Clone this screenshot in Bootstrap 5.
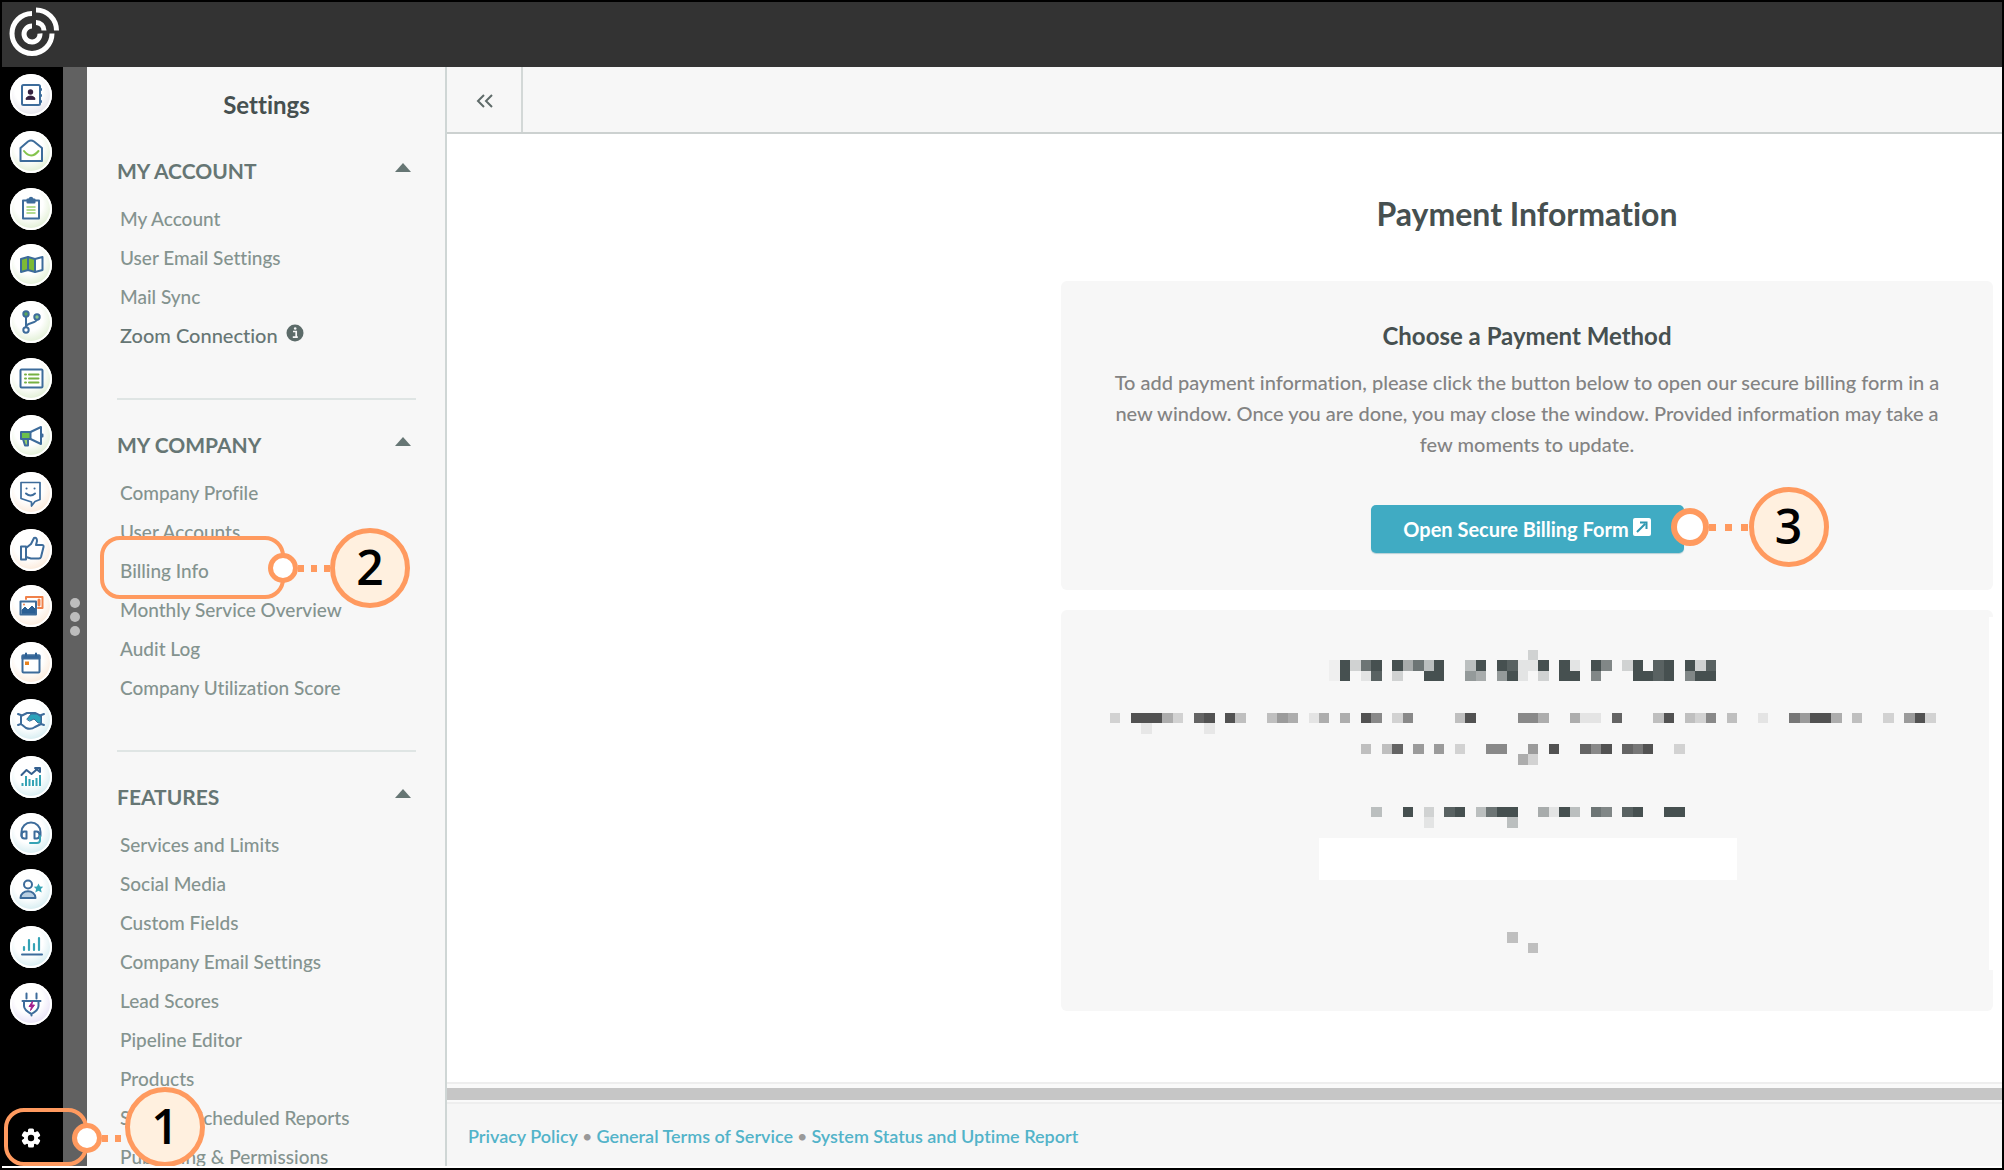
<!DOCTYPE html>
<html lang="en">
<head>
<meta charset="utf-8">
<meta name="viewport" content="width=device-width, initial-scale=1">
<title>Settings - Payment Information</title>
<link href="https://cdn.jsdelivr.net/npm/bootstrap@5.3.0/dist/css/bootstrap.min.css" rel="stylesheet">
<style>
  :root { --ink: #465050; --muted: #667674; --item: #84938f; --panel: #f7f7f7; --accent: #40abc3; --mark-line: #ff9a5f; --mark-fill: #fff0df; }
  body { font-family: Lato, "Open Sans", sans-serif; font-variant-ligatures: none; background: #fff; color: var(--ink); }
  a { text-decoration: none; }
  .app-shell { border: 2px solid #000; padding-bottom: 2px; }
  .top-bar { height: 65px; background: #333; padding: 3px 4px; }
  .rail { width: 61px; background: #000; z-index: 5; }
  .rail-list { padding: 7px 0 0 8px; margin-bottom: 85px; }
  .rail-btn { display: block; width: 42px; height: 42px; border-radius: 50%; background: radial-gradient(circle at 45% 38%, #fff 40%, var(--tint) 100%); box-shadow: inset 0 0 0 2px #fff; }
  .rail-btn svg { display: block; fill: none; stroke: #3d6c9b; stroke-width: 2; stroke-linejoin: round; stroke-linecap: round; }
  .t-grey { --tint: #d0cedc; } .t-green { --tint: #c9e3b2; } .t-peach { --tint: #f8d9bd; } .t-aqua { --tint: #b2dde5; } .t-violet { --tint: #d5c9ef; }
  .gear-slot { height: 56px; padding-left: 19px; }
  .grip { width: 24px; background: #616161; gap: 4px; }
  .grip i { width: 10px; height: 10px; border-radius: 50%; background: #bdbdbd; }
  .side { width: 360px; background: var(--panel); border-right: 2px solid #cfd6d5; padding: 23px 29px 0 30px; }
  .side-title { font-size: 24px; line-height: 30px; margin-bottom: 36px; }
  .side-group { padding-bottom: 43px; margin-bottom: 30px; border-bottom: 2px solid #dfe5e4; }
  .side-group:last-child { border: 0; }
  .side-head { border: 0; background: none; padding: 0 4px 0 0; font-size: 21px; line-height: 30px; color: var(--muted); margin-bottom: 13px; }
  .side-list { padding-left: 3px; font-size: 19px; font-weight: 500; line-height: 39px; }
  .side-list li { height: 39px; white-space: nowrap; }
  .side-list a { color: var(--item); }
  .side-list a.strong-item { color: var(--muted); font-size: 20px; }
  .tool-strip { height: 67px; background: var(--panel); border-bottom: 2px solid #ccd1d0; }
  .fold-btn { width: 76px; border: 0; border-right: 2px solid #d3d8d7; background: none; }
  .stage { padding: 60px 9px 0 0; }
  .pay-col { width: 932px; max-width: 100%; }
  .pay-title { font-size: 32px; line-height: 40px; margin-bottom: 47px; }
  .pane { background: var(--panel); border-radius: 6px; margin-bottom: 20px; }
  .pane-pay { padding: 40px 38px 37px; }
  .pane-pay h2 { font-size: 24px; line-height: 30px; margin-bottom: 16px; }
  .pane-pay p { font-size: 20px; font-weight: 500; line-height: 31px; color: #838383; margin-bottom: 45px; }
  .bill-btn { height: 48px; width: 313px; background: var(--accent); color: #fff; font-size: 20px; font-weight: 700; border: 0; border-radius: 5px; padding: 0; box-shadow: 0 1px 1px #b5cfd5; }
  .bill-btn:hover { background: var(--accent); color: #fff; }
  .pane-hidden { padding: 40px 0 58px 2px; }
  .pane-hidden::after { content: ""; position: absolute; right: 0; top: 7px; bottom: 41px; width: 4px; background: #fff; }
  .scroll-track { height: 22px; padding: 4px 0; border-top: 2px solid #eee; border-bottom: 2px solid #eee; background: #fafafa; }
  .scroll-thumb { height: 12px; background: #c6c6c6; }
  .foot { height: 62px; background: #f6f6f6; padding: 2px 0 0 21px; font-size: 18px; color: #999; }
  .foot a { color: #52b3c9; font-weight: 600; }
  .mark-box { position: absolute; border: 4px solid var(--mark-line); border-radius: 20px; pointer-events: none; }
  .callout { position: absolute; display: flex; align-items: center; pointer-events: none; z-index: 6; }
  .ring { width: 30px; height: 30px; border: 5px solid var(--mark-line); border-radius: 50%; background: #fff; flex: none; }
  .ring-lg { width: 38px; height: 38px; border-width: 6px; }
  .dots { width: 34px; height: 7px; flex: none; background: repeating-linear-gradient(90deg, var(--mark-line) 0 6px, transparent 6px 13px); }
  .bubble { width: 80px; height: 80px; border: 5px solid var(--mark-line); border-radius: 50%; background: var(--mark-fill); color: #000; font: 600 48px/68px "Open Sans", sans-serif; text-align: center; flex: none; }
  .box-bill { left: -20px; top: -15px; width: 185px; height: 63px; }
  .co-bill { left: 148px; top: -23px; }
  .co-bill .dots { width: 32px; }
  .box-gear { left: 2px; top: -2px; width: 84px; height: 58px; }
  .co-gear { left: 70px; top: -1px; }
  .co-gear .bubble { margin: -22px 0 0 -7px; }
  .co-gear .dots { width: 30px; }
  .co-form { left: 300px; top: -18px; }
  .co-form .dots { width: 40px; background: repeating-linear-gradient(90deg, var(--mark-line) 0 7px, transparent 7px 16px); }
</style>
<script src="https://cdn.jsdelivr.net/npm/bootstrap@5.3.0/dist/js/bootstrap.bundle.min.js"></script>
</head>
<body>
<div class="app-shell d-flex flex-column vh-100 overflow-hidden">
  <header class="top-bar flex-shrink-0">
    <a href="#" aria-label="Home"><svg width="56" height="56" viewBox="6 5 56 56" fill="none" stroke="#fff" stroke-width="5"><path d="M32 13.500A20 20 0 1 0 52 33.500M36 10A20.500 20.500 0 0 1 56.500 30.500M32 26A8 8 0 1 0 40 33.500M36 22.500A8 8 0 0 1 44 30.500"/></svg></a>
  </header>
  <div class="d-flex flex-grow-1 overflow-hidden">
    <nav class="rail position-relative d-flex flex-column flex-shrink-0" aria-label="Main">
      <ul class="rail-list list-unstyled d-flex flex-column justify-content-between flex-grow-1">
        <li><a class="rail-btn t-grey" href="#" aria-label="Contacts"><svg viewBox="0 0 42 42"><rect x="12" y="11" width="18" height="20" rx="1.500"/><path d="M31 15v1M31 21v1M31 27v1"/><circle cx="20.500" cy="18" r="2.700" fill="#35203f" stroke="none"/><path d="M16 25c0-4 9-4 9 0z" fill="#35203f" stroke="#35203f" stroke-width="1"/></svg></a></li>
        <li><a class="rail-btn t-green" href="#" aria-label="Email"><svg viewBox="0 0 42 42"><path d="M10.500 30V17L18 10.500q3-2 6 0L32 17v13z"/><path d="M14 20q7 9 14.500 0" stroke="#84c44c"/></svg></a></li>
        <li><a class="rail-btn t-green" href="#" aria-label="Forms"><svg viewBox="0 0 42 42"><rect x="13" y="12.500" width="16" height="18"/><path d="M17.500 14.500v-3H19q2-3.500 4 0h1.500v3z" fill="#3d6c9b"/><path d="M17 19h8M17 22h8M17 25h8" stroke="#9ad06c" stroke-width="1.500"/></svg></a></li>
        <li><a class="rail-btn t-green" href="#" aria-label="Journeys"><svg viewBox="0 0 42 42"><path d="M11 15l7-2 7 2v13l-7-2-7 2z" fill="#7dba35"/><path d="M18 13v13M25 15l7.500-2v13L25 28"/></svg></a></li>
        <li><a class="rail-btn t-green" href="#" aria-label="Automations"><svg viewBox="0 0 42 42"><path d="M16 15v11M27 18c0 5-11 3-11 8"/><circle cx="16" cy="13" r="2.700" fill="#5aa55a"/><circle cx="27" cy="16" r="2.700" fill="#8cc88c"/><circle cx="16" cy="29" r="2.700" fill="#fff"/></svg></a></li>
        <li><a class="rail-btn t-green" href="#" aria-label="Lists"><svg viewBox="0 0 42 42"><rect x="10.500" y="11.500" width="22" height="18" rx="1"/><path d="M15 16.500h1M15 20.500h1M15 24.500h1M19 16.500h9.500M19 20.500h9.500M19 24.500h9.500" stroke="#76b043"/></svg></a></li>
        <li><a class="rail-btn t-green" href="#" aria-label="Campaigns"><svg viewBox="0 0 42 42"><path d="M13 24h5v6.500h-3z" fill="#9ad06c"/><path d="M11 17h9.500v7H11z" fill="#6cc04a"/><path d="M20.500 17L31 12v17l-10.500-5M32.500 19.500v2"/></svg></a></li>
        <li><a class="rail-btn t-peach" href="#" aria-label="Social"><svg viewBox="0 0 42 42"><path d="M11 10.500h19v17l-5 2-3.500 4.500v-4L11 26.500z" stroke-width="1.700"/><path d="M16.500 16.500h.1M24.500 16.500h.1M16 21.500q4.500 4 9 0"/></svg></a></li>
        <li><a class="rail-btn t-peach" href="#" aria-label="Reviews"><svg viewBox="0 0 42 42"><path d="M11 17.500h5v13h-5z"/><path d="M16 19l5-4 3-6q3-1 3 3l-1 4h6q2 0 1.500 2l-2.500 10q-.5 1.500-2 1.500h-8l-5-1.500"/></svg></a></li>
        <li><a class="rail-btn t-peach" href="#" aria-label="Media"><svg viewBox="0 0 42 42"><path d="M16 14v-2h16.500v11H28" stroke="#f0814a"/><path d="M29 15v5" stroke="#f0814a" stroke-width="3"/><rect x="10.500" y="16.500" width="15.500" height="13" fill="#fff"/><path d="M12 28v-3l3-3 3 3 4-4 3 3v4z" fill="#2a5f94" stroke="#2a5f94" stroke-width="1"/><circle cx="14" cy="19.500" r="1" fill="#f0814a" stroke="none"/></svg></a></li>
        <li><a class="rail-btn t-peach" href="#" aria-label="Calendar"><svg viewBox="0 0 42 42"><rect x="12.500" y="13.500" width="17" height="17" rx="1"/><path d="M12.500 13.500h17v3h-17z" fill="#2a5f94"/><path d="M16 11.500v2M26 11.500v2" stroke="#2a5f94"/><path d="M15 19.500h4v3.500h-4z" fill="#e8821e" stroke="none"/></svg></a></li>
        <li><a class="rail-btn t-aqua" href="#" aria-label="Deals"><svg viewBox="0 0 42 42"><path d="M8 15l4 1.500 5-2.500h8l5 2.500 4-1.500M8 26l3-1 5 4q5 2 9-1l6-3 3 1M11 17v8M31 17v8"/><path d="M17 20l4-5h6l4 3v6h-3l-4-4-4 2z" fill="#2ba3bb" stroke-width="1"/></svg></a></li>
        <li><a class="rail-btn t-aqua" href="#" aria-label="Opportunities"><svg viewBox="0 0 42 42"><path d="M11.500 19l5-5 5 4 7-6M25 12h5v4z" stroke="#34608f" fill="none"/><path d="M12.500 27v3M16 20v10M19.500 23v7M23 24v6M26.500 22v8M30 19v11" stroke="#35a3b5" stroke-linecap="butt"/></svg></a></li>
        <li><a class="rail-btn t-aqua" href="#" aria-label="Support"><svg viewBox="0 0 42 42"><path d="M11.500 23v-4a9.500 9.500 0 0 1 19 0v4"/><path d="M16.500 18.500v7h-2q-3 0-3-3.500t3-3.500zM24.500 18.500v7h2q3 0 3-3.500t-3-3.500z"/><path d="M30 23v4q0 3-3 3h-7" stroke="#35a3b5"/></svg></a></li>
        <li><a class="rail-btn t-aqua" href="#" aria-label="Lead Generation"><svg viewBox="0 0 42 42"><circle cx="18" cy="15.500" r="4"/><path d="M10.500 29c0-9 15-9 15 0z" fill="#b9cfe2"/><path d="M28.500 14.500l1.500 3 3.200.3-2.300 2.200.8 3.500-3.200-1.700-3.200 1.700.8-3.500-2.300-2.200 3.200-.3z" fill="#35a3b5" stroke="none"/></svg></a></li>
        <li><a class="rail-btn t-aqua" href="#" aria-label="Analytics"><svg viewBox="0 0 42 42"><path d="M12 28.500h20"/><path d="M14 21v3M19 14v10M24 18v6M29 12v12" stroke="#35a3b5" stroke-width="2.200"/></svg></a></li>
        <li><a class="rail-btn t-violet" href="#" aria-label="Integrations"><svg viewBox="0 0 42 42"><path d="M16.500 10.500v5M26.500 10.500v5M12.500 18h18M14 18v5q0 4 7.500 8 7-4 7-8v-5M21.500 31v1.500"/><path d="M22.500 18.500l-3.500 5h2.500l-1 4 4-5.500H22z" fill="#a3218e" stroke="#a3218e" stroke-width="1"/></svg></a></li>
      </ul>
      <div class="gear-slot position-relative d-flex align-items-center">
        <a href="#" aria-label="Settings" class="d-flex"><svg width="20" height="20" viewBox="-10 -10 20 20"><g fill="#fff"><circle r="7"/><rect x="-3" y="-9.500" width="6" height="19" rx="1.500"/><rect x="-3" y="-9.500" width="6" height="19" rx="1.500" transform="rotate(60)"/><rect x="-3" y="-9.500" width="6" height="19" rx="1.500" transform="rotate(120)"/></g><circle r="3.200" fill="#000"/></svg></a>
        <div class="mark-box box-gear"></div>
        <div class="callout co-gear"><span class="ring"></span><span class="dots"></span><span class="bubble">1</span></div>
      </div>
    </nav>
    <div class="grip d-flex flex-column justify-content-center align-items-center flex-shrink-0"><i></i><i></i><i></i></div>
    <aside class="side flex-shrink-0 overflow-hidden">
      <h1 class="side-title fw-bold text-center">Settings</h1>
      <section class="side-group">
        <button class="side-head fw-bold w-100 d-flex justify-content-between" type="button">MY ACCOUNT<svg class="mt-1" width="18" height="16" viewBox="0 0 18 16"><path d="M1 12L9 3l8 9z" fill="#667674"/></svg></button>
        <ul class="side-list list-unstyled mb-0">
          <li><a href="#">My Account</a></li>
          <li><a href="#">User Email Settings</a></li>
          <li><a href="#">Mail Sync</a></li>
          <li class="d-flex"><a class="strong-item" href="#">Zoom Connection</a><svg class="ms-2 mt-2" width="18" height="18" viewBox="0 0 18 18"><circle cx="9" cy="9" r="8.500" fill="#5c6b69"/><path d="M7 7.500h3.200v5.500M6.800 13.200h5" stroke="#f7f7f7" stroke-width="1.700" fill="none"/><circle cx="9.200" cy="4.500" r="1.300" fill="#f7f7f7"/></svg></li>
        </ul>
      </section>
      <section class="side-group">
        <button class="side-head fw-bold w-100 d-flex justify-content-between" type="button">MY COMPANY<svg class="mt-1" width="18" height="16" viewBox="0 0 18 16"><path d="M1 12L9 3l8 9z" fill="#667674"/></svg></button>
        <ul class="side-list list-unstyled mb-0">
          <li><a href="#">Company Profile</a></li>
          <li><a href="#">User Accounts</a></li>
          <li class="position-relative"><a href="#">Billing Info</a>
            <div class="mark-box box-bill"></div>
            <div class="callout co-bill"><span class="ring"></span><span class="dots"></span><span class="bubble">2</span></div>
          </li>
          <li><a href="#">Monthly Service Overview</a></li>
          <li><a href="#">Audit Log</a></li>
          <li><a href="#">Company Utilization Score</a></li>
        </ul>
      </section>
      <section class="side-group">
        <button class="side-head fw-bold w-100 d-flex justify-content-between" type="button">FEATURES<svg class="mt-1" width="18" height="16" viewBox="0 0 18 16"><path d="M1 12L9 3l8 9z" fill="#667674"/></svg></button>
        <ul class="side-list list-unstyled mb-0">
          <li><a href="#">Services and Limits</a></li>
          <li><a href="#">Social Media</a></li>
          <li><a href="#">Custom Fields</a></li>
          <li><a href="#">Company Email Settings</a></li>
          <li><a href="#">Lead Scores</a></li>
          <li><a href="#">Pipeline Editor</a></li>
          <li><a href="#">Products</a></li>
          <li><a href="#">Saved &amp; Scheduled Reports</a></li>
          <li><a href="#">Publishing &amp; Permissions</a></li>
        </ul>
      </section>
    </aside>
    <div class="d-flex flex-column flex-grow-1 overflow-hidden">
      <div class="tool-strip d-flex flex-shrink-0">
        <button class="fold-btn" type="button" aria-label="Collapse menu"><svg width="18" height="18" viewBox="0 0 18 18" fill="none" stroke="#5f6b69" stroke-width="2"><path d="M9 3L3 9l6 6M17 3l-6 6 6 6"/></svg></button>
      </div>
      <main class="stage flex-grow-1 overflow-hidden d-flex justify-content-end">
        <div class="pay-col text-center">
          <h2 class="pay-title fw-bold">Payment Information</h2>
          <section class="pane pane-pay">
            <h2 class="fw-bold">Choose a Payment Method</h2>
            <p>To add payment information, please click the button below to open our secure billing form in a new window. Once you are done, you may close the window. Provided information may take a few moments to update.</p>
            <div class="position-relative d-inline-block align-top">
              <button class="btn bill-btn d-flex justify-content-center align-items-center gap-1" type="button">Open Secure Billing Form<svg class="mb-1" width="18" height="18" viewBox="0 0 18 18"><rect width="18" height="18" rx="2" fill="#fff"/><path d="M4 14l8-8M7 4.500h6.500V11" fill="none" stroke="#2f98b0" stroke-width="2"/></svg></button>
              <div class="callout co-form"><span class="ring ring-lg"></span><span class="dots"></span><span class="bubble">3</span></div>
            </div>
          </section>
          <section class="pane pane-hidden position-relative">
            <svg id="mosaic" class="d-block mx-auto" width="836" height="303" viewBox="0 0 80 29" preserveAspectRatio="none" shape-rendering="crispEdges" role="img" aria-label="Hidden details"><rect x="20" y="18" width="40" height="4" fill="#fff"/></svg>
          </section>
        </div>
      </main>
      <div class="scroll-track flex-shrink-0"><div class="scroll-thumb"></div></div>
      <footer class="foot flex-shrink-0 d-flex align-items-center gap-1"><a href="#">Privacy Policy</a><span>•</span><a href="#">General Terms of Service</a><span>•</span><a href="#">System Status and Uptime Report</a></footer>
    </div>
  </div>
</div>
<script>
  // For each mosaic row: its ink, then column -> shade (9 = solid).
  const slate = '#465050', grey = '#525252';
  const cells = {
    0: [slate, {40:2}],
    1: [slate, {21:.4,22:9,23:2,24:7,25:9,27:9,28:4,29:7,30:3,31:9,34:3,35:9,37:9,38:8,39:1,40:1,41:9,43:9,44:1,46:9,47:6,49:2,50:9,52:8,53:9,55:9,56:2,57:8}],
    2: [slate, {21:.4,22:9,24:1,25:8,27:2,30:9,31:9,34:5,35:4,37:5,38:9,39:1,41:2,43:9,44:9,46:6,50:9,51:9,52:8,53:9,55:6,56:9,57:9}],
    6: [grey, {0:2,2:9,3:9,4:9,5:4,6:2,8:8,9:9,11:9,12:3,15:3,16:5,17:4,19:1,20:4,22:4,24:9,25:6,27:2,28:6,33:3,34:9,39:6,40:6,41:4,44:4,45:1,46:1,48:8,52:3,53:9,55:3,56:2,57:6,59:3,62:1,65:7,66:5,67:9,68:9,69:4,71:3,74:2,76:5,77:9,78:2}],
    7: [grey, {3:.8,9:.8}],
    9: [grey, {24:3,26:3,27:8,29:5,31:5,33:2,36:6,37:6,40:5,42:9,45:8,46:6,47:9,49:8,50:7,51:9,54:2}],
    10: [grey, {39:4,40:2}],
    15: [slate, {25:3,28:9,30:2,32:8,33:9,35:3,36:7,37:9,38:9,41:4,42:1,43:9,44:3,46:7,47:6,49:8,50:9,53:9,54:9}],
    16: [slate, {30:1,38:3}],
    27: [grey, {38:3}],
    28: [grey, {40:3}]
  };
  const mosaic = document.getElementById('mosaic');
  for (const [y, [fill, cols]] of Object.entries(cells))
    for (const [x, shade] of Object.entries(cols)) {
      const r = document.createElementNS('http://www.w3.org/2000/svg', 'rect');
      for (const [k, v] of Object.entries({ x, y, width: 1, height: 1, fill, 'fill-opacity': shade / 9 })) r.setAttribute(k, v);
      mosaic.appendChild(r);
    }
</script>
</body>
</html>
